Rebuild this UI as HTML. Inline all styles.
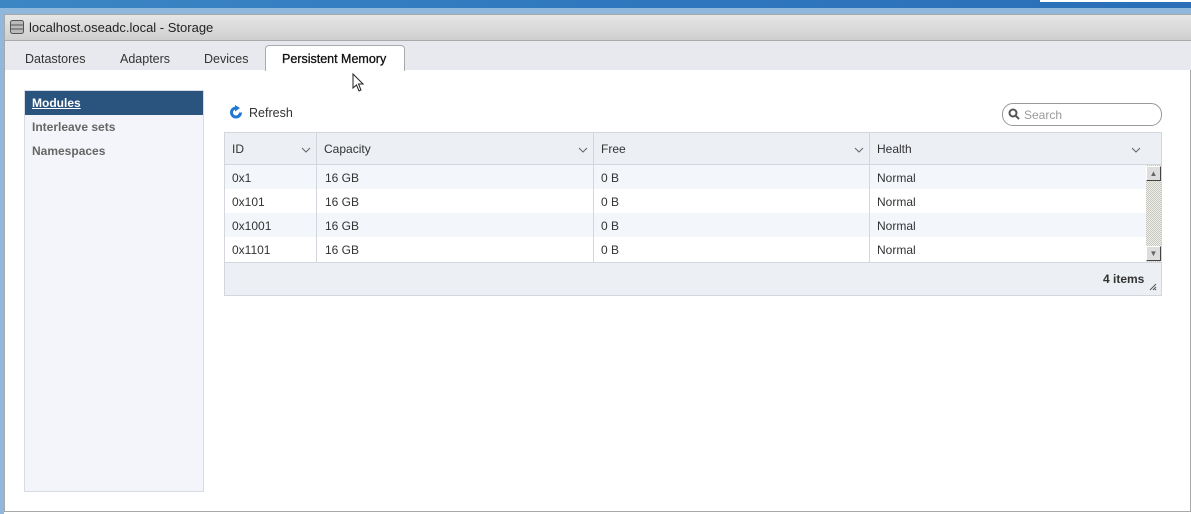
<!DOCTYPE html><html><head><style>
*{margin:0;padding:0;box-sizing:border-box}
body{width:1191px;height:514px;overflow:hidden;background:#fff;font-family:"Liberation Sans",sans-serif;font-size:12px;color:#333;position:relative}
.a{position:absolute}
.cv{position:absolute;width:10px;height:6px}
</style></head><body>
<div class="a" style="left:0;top:0;width:1191px;height:14px;background:linear-gradient(90deg,#3d86c4,#2f78bf 50%,#2a6fb8);"></div>
<div class="a" style="left:0;top:8px;width:1191px;height:6px;background:#8fb8dc"></div>
<div class="a" style="left:1040px;top:0;width:151px;height:2px;background:#fff"></div>
<div class="a" style="left:0;top:14px;width:4px;height:500px;background:#8fb8dc"></div>
<div class="a" style="left:4px;top:14px;width:1187px;height:498px;border:1px solid #a8a8a8;background:#fff"></div>
<div class="a" style="left:5px;top:15px;width:1186px;height:26px;background:linear-gradient(#e6e6e6,#cfcfcf);border-bottom:1px solid #aaa"></div>
<svg class="a" style="left:10px;top:20px" width="14" height="14"><rect x="0.5" y="0.5" width="13" height="13" rx="2" fill="#bbb" stroke="#555"/><line x1="1" y1="5" x2="13" y2="5" stroke="#555"/><line x1="1" y1="9" x2="13" y2="9" stroke="#555"/></svg>
<div class="a" style="left:29px;top:20px;font-size:13px;color:#222">localhost.oseadc.local - Storage</div>
<div class="a" style="left:5px;top:41px;width:1186px;height:29px;background:#e8e9ee"></div>
<div class="a" style="left:25px;top:52px;font-size:12.5px">Datastores</div>
<div class="a" style="left:120px;top:52px;font-size:12.5px">Adapters</div>
<div class="a" style="left:204px;top:52px;font-size:12.5px">Devices</div>
<div class="a" style="left:265px;top:45px;width:140px;height:26px;background:#fff;border:1px solid #aaa;border-bottom:none;border-radius:4px 4px 0 0;font-size:12.5px;color:#111;padding:6px 0 0 16px;-webkit-text-stroke:0.3px #111">Persistent Memory</div>
<svg class="a" style="left:352px;top:73px" width="14" height="20"><path d="M1 1 L1 15 L4.5 12 L7 18 L9 17 L6.5 11 L11 11 Z" fill="#fff" stroke="#222"/></svg>
<div class="a" style="left:24px;top:90px;width:180px;height:402px;background:#f3f5fa;border:1px solid #d6dbe4"></div>
<div class="a" style="left:25px;top:91px;width:178px;height:24px;background:#2a537d;color:#fff;font-weight:bold;text-decoration:underline;padding:5px 0 0 7px">Modules</div>
<div class="a" style="left:32px;top:120px;font-weight:bold;color:#666">Interleave sets</div>
<div class="a" style="left:32px;top:144px;font-weight:bold;color:#666">Namespaces</div>
<svg class="a" style="left:229px;top:105px" width="15" height="15"><path d="M11.5 7.5 A4.5 4.5 0 1 1 7.5 3" fill="none" stroke="#1f78d1" stroke-width="3"/><path d="M6 0 L11 3 L6 6.5 Z" fill="#1f78d1"/></svg>
<div class="a" style="left:249px;top:106px;font-size:12.5px">Refresh</div>
<div class="a" style="left:1002px;top:103px;width:160px;height:23px;border:1px solid #999;border-radius:11px;color:#999;padding:4px 0 0 21px">Search</div>
<svg class="a" style="left:1008px;top:108px" width="12" height="12"><circle cx="5" cy="5" r="3.5" fill="none" stroke="#555" stroke-width="2"/><line x1="7.5" y1="7.5" x2="11" y2="11" stroke="#555" stroke-width="2"/></svg>
<div class="a" style="left:224px;top:132px;width:938px;height:164px;border:1px solid #d3d7dd;background:#fff"></div>
<div class="a" style="left:225px;top:133px;width:936px;height:32px;background:#eceff3;border-bottom:1px solid #d3d7dd"></div>
<div class="a" style="left:225px;top:165px;width:921px;height:24px;background:#f3f6fa"></div>
<div class="a" style="left:225px;top:213px;width:921px;height:24px;background:#f3f6fa"></div>
<div class="a" style="left:316px;top:133px;width:1px;height:129px;background:#d3d7dd"></div>
<div class="a" style="left:593px;top:133px;width:1px;height:129px;background:#d3d7dd"></div>
<div class="a" style="left:869px;top:133px;width:1px;height:129px;background:#d3d7dd"></div>
<div class="a" style="left:232px;top:142px">ID</div><svg class="cv" style="left:301px;top:147px"><path d="M1 1L5 5L9 1" fill="none" stroke="#666"/></svg>
<div class="a" style="left:324px;top:142px">Capacity</div><svg class="cv" style="left:578px;top:147px"><path d="M1 1L5 5L9 1" fill="none" stroke="#666"/></svg>
<div class="a" style="left:601px;top:142px">Free</div><svg class="cv" style="left:854px;top:147px"><path d="M1 1L5 5L9 1" fill="none" stroke="#666"/></svg>
<div class="a" style="left:877px;top:142px">Health</div><svg class="cv" style="left:1131px;top:147px"><path d="M1 1L5 5L9 1" fill="none" stroke="#666"/></svg>
<div class="a" style="left:232px;top:171px">0x1</div><div class="a" style="left:325px;top:171px">16 GB</div><div class="a" style="left:601px;top:171px">0 B</div><div class="a" style="left:877px;top:171px">Normal</div>
<div class="a" style="left:232px;top:195px">0x101</div><div class="a" style="left:325px;top:195px">16 GB</div><div class="a" style="left:601px;top:195px">0 B</div><div class="a" style="left:877px;top:195px">Normal</div>
<div class="a" style="left:232px;top:219px">0x1001</div><div class="a" style="left:325px;top:219px">16 GB</div><div class="a" style="left:601px;top:219px">0 B</div><div class="a" style="left:877px;top:219px">Normal</div>
<div class="a" style="left:232px;top:243px">0x1101</div><div class="a" style="left:325px;top:243px">16 GB</div><div class="a" style="left:601px;top:243px">0 B</div><div class="a" style="left:877px;top:243px">Normal</div>
<div class="a" style="left:1146px;top:165px;width:15px;height:97px;background:repeating-conic-gradient(#c8c8c0 0 25%,#eeeee8 0 50%) 0 0/2px 2px"></div>
<div class="a" style="left:1146px;top:166px;width:15px;height:15px;background:#ddd;border:1px solid;border-color:#fff #444 #444 #fff;font-size:8px;text-align:center;color:#666;line-height:13px">&#9650;</div>
<div class="a" style="left:1146px;top:246px;width:15px;height:15px;background:#ddd;border:1px solid;border-color:#fff #444 #444 #fff;font-size:8px;text-align:center;color:#666;line-height:13px">&#9660;</div>
<div class="a" style="left:225px;top:262px;width:936px;height:33px;background:#eceff3;border-top:1px solid #d3d7dd"></div>
<div class="a" style="left:1103px;top:272px;font-weight:bold">4 items</div>
<svg class="a" style="left:1149px;top:283px" width="8" height="8"><path d="M7 1L1 7M7 4L4 7M7 6L6 7" stroke="#555"/></svg>
</body></html>
